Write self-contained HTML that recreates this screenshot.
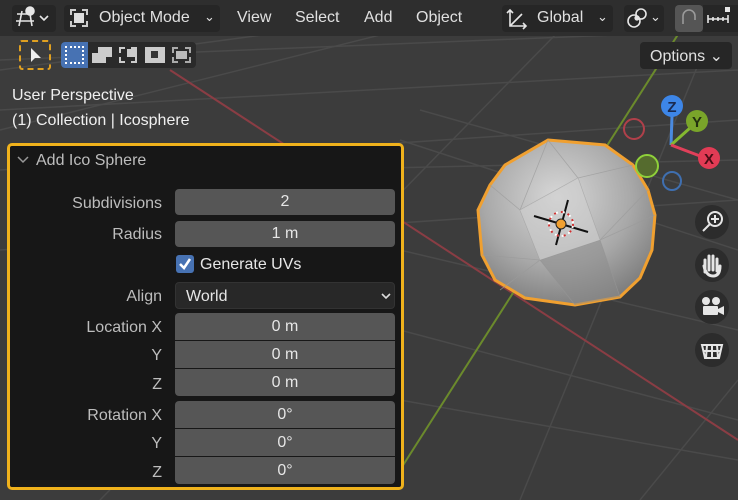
<!DOCTYPE html>
<html><head><meta charset="utf-8"><style>
*{margin:0;padding:0;box-sizing:border-box}
body{width:738px;height:500px;overflow:hidden;background:#3c3c3c;font-family:"Liberation Sans","DejaVu Sans",sans-serif;color:#e0e0e0;position:relative}
.a{position:absolute}
.t{font-size:16px;white-space:nowrap}
.lbl{position:absolute;right:576px;font-size:16px;color:#bdbdbd;text-align:right;white-space:nowrap;margin-top:2px}
.fld{position:absolute;left:175px;width:220px;background:#565656;color:#e6e6e6;font-size:16px;text-align:center;border-radius:4px}
</style></head><body>
<svg class="a" style="left:0;top:0" width="738" height="500">
<defs><radialGradient id="g" cx="0.45" cy="0.35" r="0.7"><stop offset="0" stop-color="#d8d8d8"/><stop offset="0.6" stop-color="#a8a8a8"/><stop offset="1" stop-color="#7a7a7a"/></radialGradient></defs>
<g stroke="#4a4a4a" stroke-width="1.5" fill="none">
<path d="M0 60 L738 30 M0 110 L738 70 M0 170 L738 120 M300 170 L738 160 M0 250 L738 200"/>
<path d="M0 130 L400 30 M100 500 L560 30 M520 500 L700 60 M640 500 L738 380 M0 70 L300 30"/>
<path d="M400 140 L738 250 M400 250 L738 330 M400 400 L738 460 M420 110 L738 200 M400 330 L738 420"/>
</g>
<path d="M170 70 L738 440" stroke="#8a3d44" stroke-width="2"/>
<path d="M400 470 L700 0" stroke="#6b8a2c" stroke-width="2"/>
<polygon points="548,140 605,145 633,165 648,190 655,215 652,250 640,278 620,297 575,305 525,298 495,280 482,255 478,210 490,185 505,165" fill="url(#g)" stroke="#f0a030" stroke-width="3"/>
<g stroke="#9a9a9a" stroke-width="0.8" fill="none" opacity="0.7">
<path d="M520 210 L578 178 L600 240 L540 260 Z M578 178 L548 140 M578 178 L633 165 M600 240 L655 215 M600 240 L620 297 M540 260 L575 305 M540 260 L482 255 M520 210 L490 185 M520 210 L548 140 M540 260 L500 290 M600 240 L648 190"/>
</g>
<polygon points="520,210 578,178 600,240 540,260" fill="#cfcfcf" opacity="0.6"/>
<polygon points="540,260 600,240 620,297 575,305" fill="#8a8a8a" opacity="0.5"/>
<g stroke="#111" stroke-width="2"><path d="M534 216 L588 232 M568 200 L556 245"/></g>
<circle cx="561" cy="224" r="12" fill="none" stroke="#fff" stroke-width="2" stroke-dasharray="4 3"/>
<circle cx="561" cy="224" r="12" fill="none" stroke="#d03030" stroke-width="2" stroke-dasharray="2 5"/>
<circle cx="561" cy="224" r="5" fill="#f0a030" stroke="#222"/>
<circle cx="634" cy="129" r="10" fill="none" stroke="#b0404a" stroke-width="2"/>
<circle cx="647" cy="166" r="11" fill="#556b2e" stroke="#8fd13a" stroke-width="2"/>
<circle cx="672" cy="181" r="9" fill="none" stroke="#3f6fb0" stroke-width="2"/>
<path d="M671 145 L672 116" stroke-width="3" stroke="#4a8ae0"/>
<path d="M671 145 L690 128" stroke="#84b830" stroke-width="3"/><path d="M671 145 L700 156" stroke="#e0405a" stroke-width="3"/>
<circle cx="672" cy="106" r="11" fill="#3d86e8"/><text x="672" y="112" font-size="15" font-weight="bold" text-anchor="middle" fill="#1a2a50" font-family="Liberation Sans">Z</text>
<circle cx="697" cy="121" r="11" fill="#7aa52a"/><text x="697" y="127" font-size="15" font-weight="bold" text-anchor="middle" fill="#233010" font-family="Liberation Sans">Y</text>
<circle cx="709" cy="158" r="11" fill="#e23b55"/><text x="709" y="164" font-size="15" font-weight="bold" text-anchor="middle" fill="#4a0d15" font-family="Liberation Sans">X</text>
<g fill="#2c2c2c"><circle cx="712" cy="222" r="17"/><circle cx="712" cy="265" r="17"/><circle cx="712" cy="307" r="17"/><circle cx="712" cy="350" r="17"/></g>
<g fill="none" stroke="#e6e6e6" stroke-width="2"><circle cx="715" cy="219" r="7"/><path d="M710 224 L703 231 M715 215 V223 M711 219 H719"/>
<path d="M702 345 H722 L719 358 H705 Z M707 345 L706 358 M712 345 V358 M717 345 L718 358 M703 351 H721"/></g>
<path d="M705 272 L705 260 M709 270 L709 256 M713 270 L713 256 M717 271 L717 259 M704 266 Q706 276 713 276 Q720 276 720 266" stroke="#e6e6e6" stroke-width="3" fill="none" stroke-linecap="round"/>
<g fill="#e6e6e6"><circle cx="706" cy="301" r="4"/><circle cx="716" cy="301" r="4"/><rect x="703" y="306" width="15" height="9" rx="1"/><path d="M718 309 L724 306 V315 L718 312Z"/></g>
</svg>
<!-- header -->
<div class="a" style="left:0;top:0;width:738px;height:36px;background:#2e2e2e"></div>
<div class="a" style="left:12px;top:5px;width:44px;height:27px;background:#262626;border-radius:4px"></div>
<div class="a" style="left:64px;top:5px;width:156px;height:27px;background:#262626;border-radius:4px"></div>
<div class="a" style="left:70px;top:9px;width:18px;height:18px;border:2px dashed #ccc"></div>
<div class="a" style="left:74px;top:13px;width:10px;height:10px;background:#ddd"></div>
<div class="a t" style="left:99px;top:9px">Object Mode</div>
<div class="a t" style="left:204px;top:9px;font-size:13px">⌄</div>
<div class="a t" style="left:237px;top:9px">View</div>
<div class="a t" style="left:295px;top:9px">Select</div>
<div class="a t" style="left:364px;top:9px">Add</div>
<div class="a t" style="left:416px;top:9px">Object</div>
<div class="a" style="left:502px;top:5px;width:111px;height:27px;background:#262626;border-radius:4px"></div>
<div class="a t" style="left:537px;top:9px">Global</div>
<div class="a t" style="left:597px;top:9px;font-size:13px">⌄</div>
<div class="a" style="left:624px;top:5px;width:40px;height:27px;background:#262626;border-radius:4px"></div>
<div class="a t" style="left:650px;top:9px;font-size:13px">⌄</div>
<div class="a" style="left:675px;top:5px;width:28px;height:27px;background:#555;border-radius:4px"></div>
<div class="a" style="left:703px;top:5px;width:35px;height:27px;background:#262626"></div>
<svg class="a" style="left:0;top:0" width="738" height="36">
<g fill="none" stroke="#e6e6e6" stroke-width="1.6">
<path d="M17 14 H32 M16 21 H34 M22 11 L19 26 M30 14 L32 26"/><circle cx="30" cy="11" r="4" fill="#e6e6e6"/>
<path d="M40 16 L44 20 L48 16"/>
<path d="M510 10 V26 H526 M510 26 L522 14 M507 13 L510 10 L513 13 M523 23 L526 26 L523 29"/>
<circle cx="634" cy="21" r="6"/><circle cx="641" cy="14" r="5"/><circle cx="637" cy="18" r="1.8" fill="#e6e6e6"/>
<path d="M683 24 V16 A6 6 0 0 1 695 16 L695 20" stroke="#9a9a9a"/>
<path d="M708 19 H728 M708 15 V23 M713 17 V21 M718 17 V21 M723 17 V21 M728 15 V23"/></g>
<rect x="725" y="7" width="5" height="5" fill="#e6e6e6"/>
</svg>
<div class="a" style="left:640px;top:42px;width:92px;height:27px;background:#262626;border-radius:4px"></div>
<div class="a t" style="left:650px;top:46px">Options ⌄</div>
<!-- tools -->
<div class="a" style="left:19px;top:40px;width:32px;height:30px;border:2px dashed #e0a020;border-radius:3px"></div>
<svg class="a" style="left:28px;top:46px" width="16" height="18"><path d="M3 2 L3 16 L7 12 L13 12 Z" fill="#eee"/></svg>
<div class="a" style="left:61px;top:42px;width:135px;height:26px;background:#2a2a2a;border-radius:4px"></div>
<div class="a" style="left:61px;top:42px;width:27px;height:26px;background:#4772b3;border-radius:4px 0 0 4px"></div>
<div class="a" style="left:65px;top:46px;width:19px;height:18px;border:2px dotted #fff"></div>
<div class="a" style="left:92px;top:47px;width:20px;height:16px;background:linear-gradient(#ccc,#ccc) 6px 0/14px 10px no-repeat,linear-gradient(#ccc,#ccc) 0 6px/14px 10px no-repeat"></div>
<div class="a" style="left:119px;top:47px;width:18px;height:16px;border:2px dashed #ccc;background:linear-gradient(#ccc,#ccc) 6px 0/12px 8px no-repeat"></div>
<div class="a" style="left:145px;top:47px;width:20px;height:16px;background:#ccc"></div>
<div class="a" style="left:151px;top:51px;width:7px;height:7px;background:#333"></div>
<div class="a" style="left:172px;top:47px;width:19px;height:16px;border:2px dashed #aaa"></div>
<div class="a" style="left:176px;top:51px;width:11px;height:8px;background:#bbb"></div>
<div class="a t" style="left:12px;top:87px;color:#f0f0f0">User Perspective</div>
<div class="a t" style="left:12px;top:112px;color:#f0f0f0">(1) Collection | Icosphere</div>
<!-- panel -->
<div class="a" style="left:7px;top:143px;width:397px;height:347px;background:#171717;border:3px solid #f0b21c;border-radius:5px"></div>
<svg class="a" style="left:16px;top:155px" width="14" height="10"><path d="M2 2 L7 7 L12 2" fill="none" stroke="#999" stroke-width="1.5"/></svg>
<div class="a t" style="left:36px;top:152px;color:#bdbdbd">Add Ico Sphere</div>
<div class="lbl" style="top:193px">Subdivisions</div>
<div class="fld" style="top:189px;height:26px;line-height:26px">2</div>
<div class="lbl" style="top:224px">Radius</div>
<div class="fld" style="top:221px;height:26px;line-height:26px">1 m</div>
<div class="a" style="left:176px;top:255px;width:18px;height:18px;background:#4772b3;border-radius:3px"></div>
<svg class="a" style="left:176px;top:255px" width="18" height="18"><path d="M4 9 L8 13 L14 4" fill="none" stroke="#fff" stroke-width="2.5"/></svg>
<div class="a t" style="left:200px;top:256px;color:#e6e6e6">Generate UVs</div>
<div class="lbl" style="top:286px">Align</div>
<div class="fld" style="top:282px;height:27px;line-height:27px;background:#282828;text-align:left;padding-left:10px;border:1px solid #333">World</div>
<svg class="a" style="left:380px;top:292px" width="12" height="8"><path d="M2 2 L6 6 L10 2" fill="none" stroke="#ddd" stroke-width="1.6"/></svg>
<div class="lbl" style="top:317px">Location X</div>
<div class="fld" style="top:313px;height:27px;line-height:27px;border-radius:4px 4px 0 0">0 m</div>
<div class="lbl" style="top:345px">Y</div>
<div class="fld" style="top:341px;height:27px;line-height:27px;border-radius:0">0 m</div>
<div class="lbl" style="top:374px">Z</div>
<div class="fld" style="top:369px;height:27px;line-height:27px;border-radius:0 0 4px 4px">0 m</div>
<div class="lbl" style="top:405px">Rotation X</div>
<div class="fld" style="top:401px;height:27px;line-height:27px;border-radius:4px 4px 0 0">0°</div>
<div class="lbl" style="top:433px">Y</div>
<div class="fld" style="top:429px;height:27px;line-height:27px;border-radius:0">0°</div>
<div class="lbl" style="top:462px">Z</div>
<div class="fld" style="top:457px;height:27px;line-height:27px;border-radius:0 0 4px 4px">0°</div>
</body></html>
